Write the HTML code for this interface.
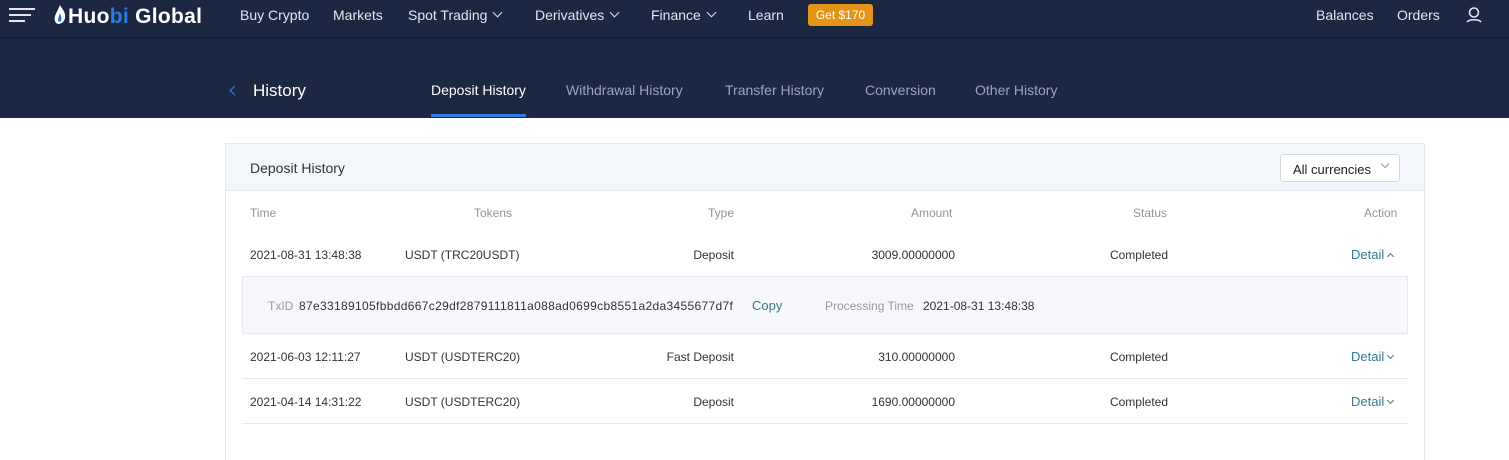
<!DOCTYPE html>
<html style="overflow:hidden;height:460px"><head><meta charset="utf-8"><style>
*{margin:0;padding:0;box-sizing:border-box}
body{width:1509px;height:460px;overflow:hidden;background:#fff;font-family:"Liberation Sans",sans-serif;position:relative}
.a{position:absolute;white-space:nowrap}
.nav{position:absolute;left:0;top:0;width:1509px;height:118px;background:#1c2741}
.line{position:absolute;left:0;top:37px;width:1509px;height:1px;background:#121a2c}
.n{font-size:14px;color:#e3e6ee;top:7px}
.s{font-size:14px;color:#9aa5bd;top:82px}
.t{font-size:12px;color:#333}
.h{font-size:12px;color:#8f949c;top:206px}
.chev{display:inline-block;width:7px;height:7px;border-right:1.6px solid #e3e6ee;border-bottom:1.6px solid #e3e6ee;transform:rotate(45deg);margin-left:7px;position:relative;top:-4px}
.d{font-size:13px;color:#357a8f}
.dc{display:inline-block;width:5px;height:5px;border-right:1px solid #357a8f;border-bottom:1px solid #357a8f;transform:rotate(45deg);margin-left:4px;position:relative;top:-3px}
.uc{display:inline-block;width:5px;height:5px;border-left:1px solid #357a8f;border-top:1px solid #357a8f;transform:rotate(45deg);margin-left:4px;position:relative;top:0px}
</style></head><body>
<div class="nav"></div><div class="line"></div>
<div class="a" style="left:9px;top:8px;width:26px;height:2px;background:#e3e6ee"></div>
<div class="a" style="left:9px;top:14px;width:22px;height:2px;background:#e3e6ee"></div>
<div class="a" style="left:9px;top:20px;width:16px;height:2px;background:#e3e6ee"></div>
<svg class="a" style="left:53px;top:5px" width="14" height="20" viewBox="0 0 14 20"><path d="M7 0C9 4 13 7 12 13C11 18 7 19 5 19C2 18 1 15 2 11C3 8 5 5 7 0Z" fill="#fff"/><path d="M7 8C8 11 9 13 8 16C7 17 6 17 5 16C5 13 6 11 7 8Z" fill="#2d6bd6"/></svg>
<div class="a" style="left:68px;top:5px;font-size:21px;font-weight:bold;color:#fff;letter-spacing:0.3px">Huo<span style="color:#2d7be0">bi</span> Global</div>
<div class="a n" style="left:240px">Buy Crypto</div>
<div class="a n" style="left:333px">Markets</div>
<div class="a n" style="left:408px">Spot Trading<span class="chev"></span></div>
<div class="a n" style="left:535px">Derivatives<span class="chev"></span></div>
<div class="a n" style="left:651px">Finance<span class="chev"></span></div>
<div class="a n" style="left:748px">Learn</div>
<div class="a" style="left:808px;top:4px;width:65px;height:22px;background:#e49418;border-radius:3px;color:#fff;font-size:12px;text-align:center;line-height:22px">Get $170</div>
<div class="a n" style="left:1316px">Balances</div>
<div class="a n" style="left:1397px">Orders</div>
<svg class="a" style="left:1465px;top:6px" width="18" height="18" viewBox="0 0 18 18" fill="none" stroke="#e3e6ee" stroke-width="1.6"><circle cx="9" cy="6.5" r="4.5"/><path d="M2 16C4 13 14 13 16 16"/></svg>
<div class="a" style="left:231px;top:87px;width:7px;height:7px;border-left:1.6px solid #3b82e0;border-bottom:1.6px solid #3b82e0;transform:rotate(45deg)"></div>
<div class="a" style="left:253px;top:81px;font-size:17px;color:#fff">History</div>
<div class="a s" style="left:431px;color:#fff">Deposit History</div>
<div class="a" style="left:431px;top:114px;width:95px;height:3px;background:#2d7be0"></div>
<div class="a s" style="left:566px">Withdrawal History</div>
<div class="a s" style="left:725px">Transfer History</div>
<div class="a s" style="left:865px">Conversion</div>
<div class="a s" style="left:975px">Other History</div>
<div class="a" style="left:225px;top:143px;width:1200px;height:330px;border:1px solid #e6eaf0"></div>
<div class="a" style="left:226px;top:144px;width:1198px;height:47px;background:#f3f6fa;border-bottom:1px solid #e6eaf0"></div>
<div class="a" style="left:250px;top:160px;font-size:14px;color:#333">Deposit History</div>
<div class="a" style="left:1280px;top:154px;width:120px;height:28px;border:1px solid #d6dae0;border-radius:3px;background:#fff"></div>
<div class="a" style="left:1293px;top:162px;font-size:13px;color:#222">All currencies</div>
<div class="a" style="left:1382px;top:161px;width:6px;height:6px;border-right:1.2px solid #999;border-bottom:1.2px solid #999;transform:rotate(45deg)"></div>
<div class="a h" style="left:250px">Time</div>
<div class="a h" style="left:474px">Tokens</div>
<div class="a h" style="left:708px">Type</div>
<div class="a h" style="left:911px">Amount</div>
<div class="a h" style="left:1133px">Status</div>
<div class="a h" style="left:1364px">Action</div>
<div class="a t" style="left:250px;top:248px">2021-08-31 13:48:38</div>
<div class="a t" style="left:405px;top:248px">USDT (TRC20USDT)</div>
<div class="a t" style="right:775px;top:248px">Deposit</div>
<div class="a t" style="right:554px;top:248px">3009.00000000</div>
<div class="a t" style="right:341px;top:248px">Completed</div>
<div class="a d" style="left:1351px;top:247px">Detail<span class="uc"></span></div>
<div class="a" style="left:242px;top:276px;width:1166px;height:58px;background:#f6f8fb;border:1px solid #e6eaf0"></div>
<div class="a t" style="left:268px;top:299px;color:#999">TxID</div>
<div class="a t" style="left:299px;top:299px;letter-spacing:0.33px">87e33189105fbbdd667c29df2879111811a088ad0699cb8551a2da3455677d7f</div>
<div class="a d" style="left:752px;top:298px">Copy</div>
<div class="a t" style="left:825px;top:299px;color:#999">Processing Time</div>
<div class="a t" style="left:923px;top:299px">2021-08-31 13:48:38</div>
<div class="a t" style="left:250px;top:350px">2021-06-03 12:11:27</div>
<div class="a t" style="left:405px;top:350px">USDT (USDTERC20)</div>
<div class="a t" style="right:775px;top:350px">Fast Deposit</div>
<div class="a t" style="right:554px;top:350px">310.00000000</div>
<div class="a t" style="right:341px;top:350px">Completed</div>
<div class="a d" style="left:1351px;top:349px">Detail<span class="dc"></span></div>
<div class="a" style="left:242px;top:378px;width:1166px;height:1px;background:#e6eaf0"></div>
<div class="a t" style="left:250px;top:395px">2021-04-14 14:31:22</div>
<div class="a t" style="left:405px;top:395px">USDT (USDTERC20)</div>
<div class="a t" style="right:775px;top:395px">Deposit</div>
<div class="a t" style="right:554px;top:395px">1690.00000000</div>
<div class="a t" style="right:341px;top:395px">Completed</div>
<div class="a d" style="left:1351px;top:394px">Detail<span class="dc"></span></div>
<div class="a" style="left:242px;top:423px;width:1166px;height:1px;background:#e6eaf0"></div>
</body></html>
